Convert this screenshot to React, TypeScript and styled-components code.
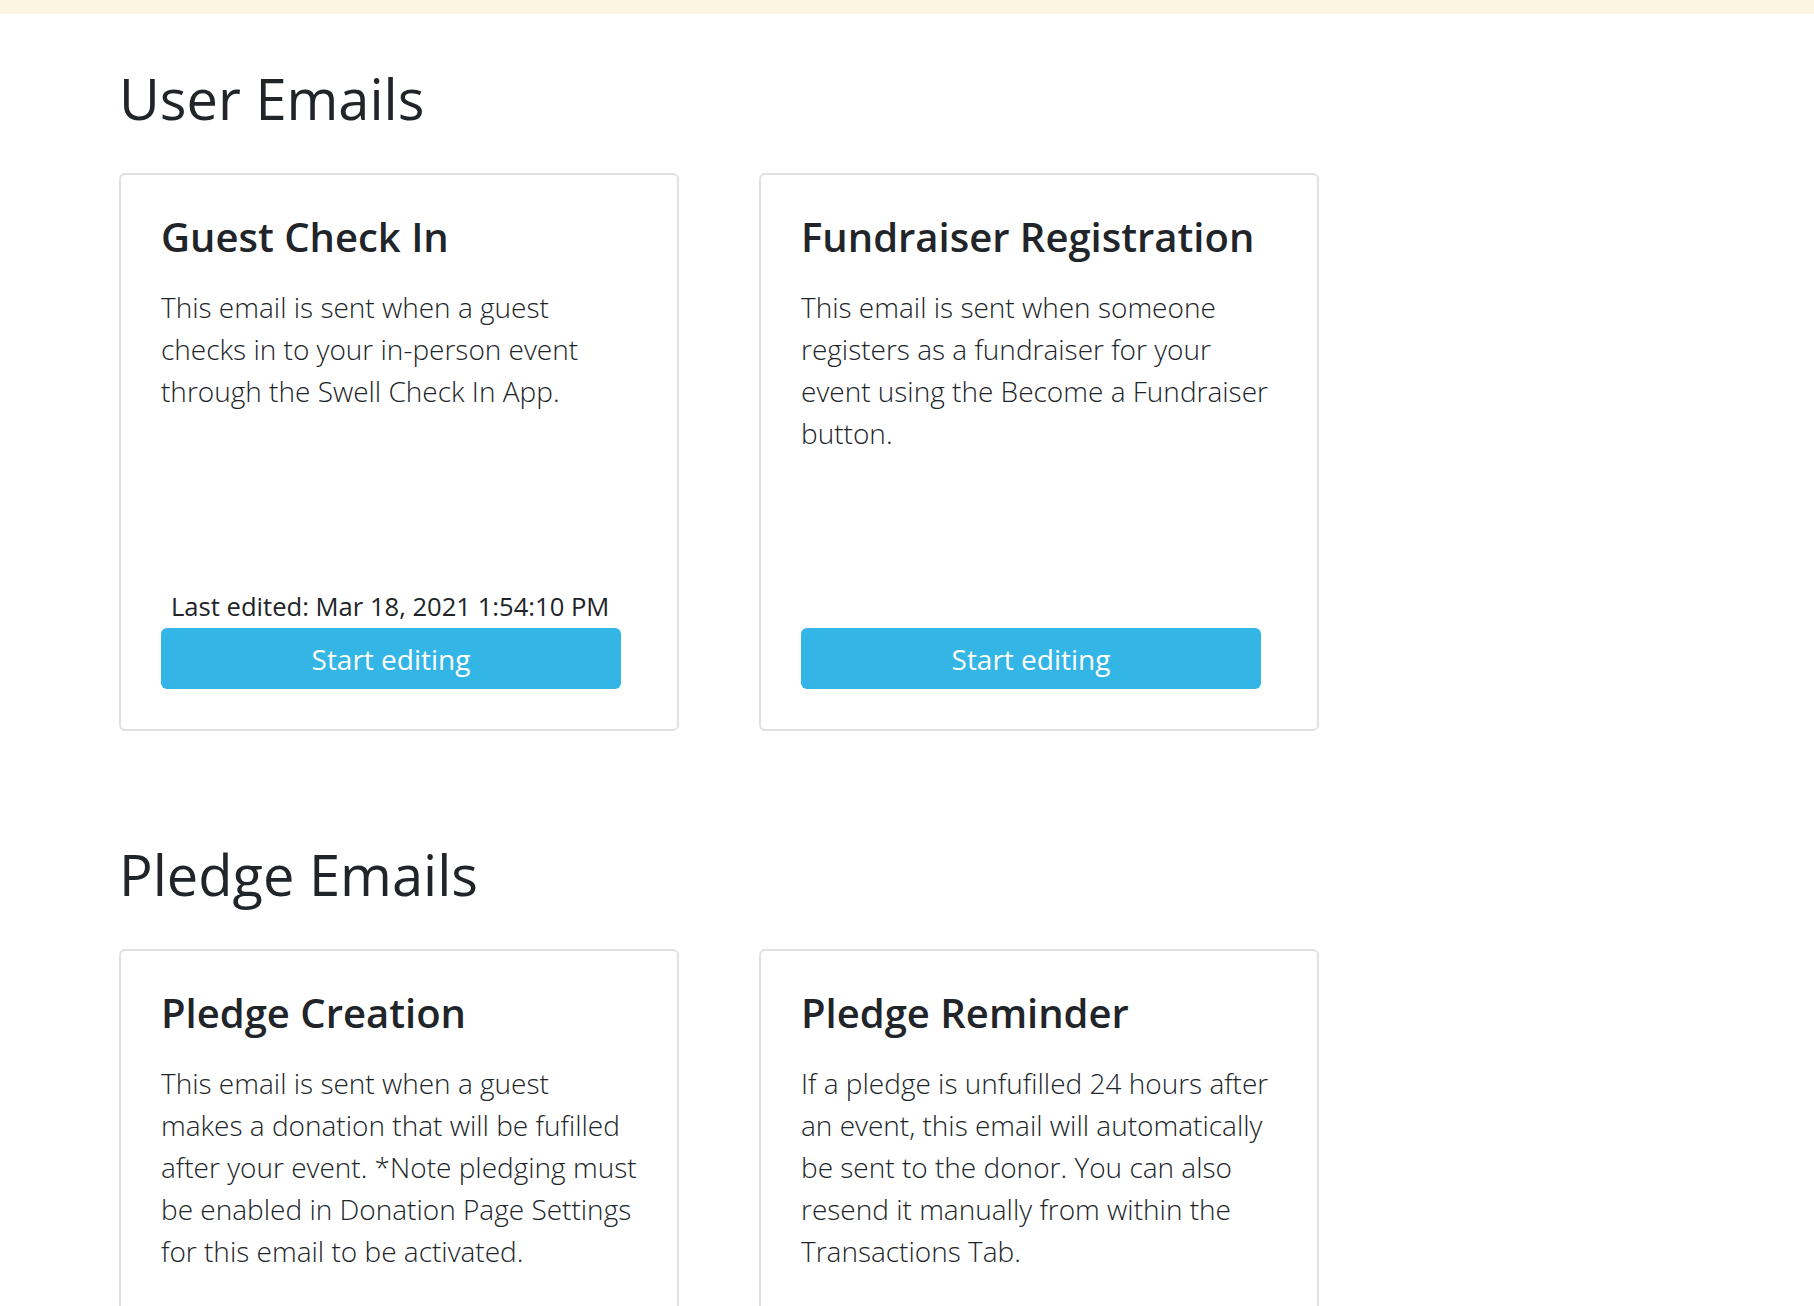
import React from "react";
import styled, { createGlobalStyle } from "styled-components";

const GlobalStyle = createGlobalStyle`
  html, body {
    margin: 0;
    padding: 0;
    background: #ffffff;
  }
  body {
    font-family: "Open Sans", "Noto Sans", "Liberation Sans", sans-serif;
    color: #212529;
    -webkit-font-smoothing: antialiased;
  }
  * { box-sizing: border-box; }
`;

const TopBar = styled.div`
  height: 14px;
  background: #fcf5e1;
`;

const Main = styled.main`
  padding: 51px 0 0 119px;
`;

const Section = styled.section`
  margin-bottom: 110px;
`;

const SectionTitle = styled.h2`
  margin: 0 0 41px;
  font-size: 56px;
  font-weight: 400;
  line-height: 1.2;
  color: #212529;
`;

const CardRow = styled.div`
  display: flex;
  gap: 80px;
  align-items: stretch;
`;

const Card = styled.article`
  width: 560px;
  height: 558px;
  border: 2px solid #e1e1e1;
  border-radius: 6px;
  padding: 40px;
  display: flex;
  flex-direction: column;
  background: #fff;
`;

const CardTitle = styled.h3`
  margin: 0;
  font-size: 40px;
  font-weight: 600;
  line-height: 44px;
  color: #212529;
`;

const Description = styled.p`
  margin: 27px 0 0;
  font-size: 28px;
  font-weight: 300;
  line-height: 42px;
  color: #212529;
`;

const CardFooter = styled.div`
  margin-top: auto;
  display: flex;
  flex-direction: column;
`;

const LastEdited = styled.div`
  padding-left: 10px;
  margin-bottom: 3px;
  font-size: 25.6px;
  font-weight: 400;
  line-height: 36px;
  color: #212529;
`;

const EditButton = styled.button`
  width: 460px;
  height: 61px;
  border: none;
  border-radius: 6px;
  background: #33b5e5;
  color: #ffffff;
  font-family: "Open Sans", "Noto Sans", sans-serif;
  font-size: 28px;
  font-weight: 400;
  line-height: 40px;
  cursor: pointer;
  padding: 0;
`;

type EmailCard = {
  title: string;
  description: string;
  lastEdited?: string;
};

const sections: { title: string; cards: EmailCard[] }[] = [
  {
    title: "User Emails",
    cards: [
      {
        title: "Guest Check In",
        description:
          "This email is sent when a guest checks in to your in-person event through the Swell Check In App.",
        lastEdited: "Mar 18, 2021 1:54:10 PM",
      },
      {
        title: "Fundraiser Registration",
        description:
          "This email is sent when someone registers as a fundraiser for your event using the Become a Fundraiser button.",
      },
    ],
  },
  {
    title: "Pledge Emails",
    cards: [
      {
        title: "Pledge Creation",
        description:
          "This email is sent when a guest makes a donation that will be fufilled after your event. *Note pledging must be enabled in Donation Page Settings for this email to be activated.",
      },
      {
        title: "Pledge Reminder",
        description:
          "If a pledge is unfufilled 24 hours after an event, this email will automatically be sent to the donor. You can also resend it manually from within the Transactions Tab.",
      },
    ],
  },
];

export default function App() {
  return (
    <>
      <GlobalStyle />
      <TopBar />
      <Main>
        {sections.map((section) => (
          <Section key={section.title}>
            <SectionTitle>{section.title}</SectionTitle>
            <CardRow>
              {section.cards.map((card) => (
                <Card key={card.title}>
                  <CardTitle>{card.title}</CardTitle>
                  <Description>{card.description}</Description>
                  <CardFooter>
                    {card.lastEdited && (
                      <LastEdited>Last edited: {card.lastEdited}</LastEdited>
                    )}
                    <EditButton type="button">Start editing</EditButton>
                  </CardFooter>
                </Card>
              ))}
            </CardRow>
          </Section>
        ))}
      </Main>
    </>
  );
}
